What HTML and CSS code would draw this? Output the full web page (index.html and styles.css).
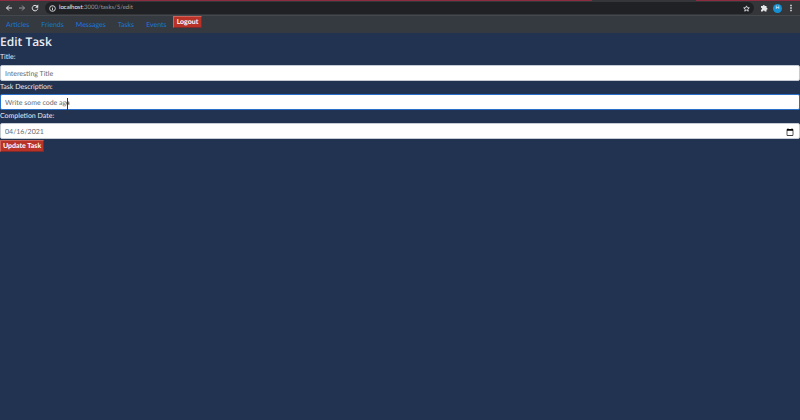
FILE: index.html
```html
<!DOCTYPE html>
<html lang="en-US">
<head>
<meta charset="utf-8">
<title>Edit Task</title>
<link rel="stylesheet" href="styles.css">
</head>
<body>
<header class="browser">
  <div class="tabstrip"><span class="tab"></span></div>
  <div class="toolbar">
    <button class="icon" type="button" aria-label="Back"><svg viewBox="0 0 16 16"><path d="M14 8H3M8 3L3 8l5 5"/></svg></button>
    <button class="icon dim" type="button" aria-label="Forward"><svg viewBox="0 0 16 16"><path d="M2 8h11M8 3l5 5-5 5"/></svg></button>
    <button class="icon" type="button" aria-label="Reload"><svg viewBox="0 0 16 16"><path d="M12.500 5A5.500 5.500 0 1 0 13.500 9"/><path class="solid" d="M14.500 1v6.500H8z"/></svg></button>
    <div class="omnibox">
      <svg class="info" viewBox="0 0 16 16"><circle cx="8" cy="8" r="6.500"/><path d="M8 7v5M8 4v1.500"/></svg>
      <span class="url"><span class="host">localhost</span>:3000/tasks/5/edit</span>
      <button class="star" type="button" aria-label="Bookmark"><svg viewBox="0 0 16 16"><path d="M8 2l1.800 4.200 4.600.4-3.500 3 1.100 4.500L8 11.700l-4 2.400 1.100-4.500-3.500-3 4.600-.4z"/></svg></button>
    </div>
    <button class="icon" type="button" aria-label="Extensions"><svg viewBox="0 0 16 16"><path class="solid" d="M2 4h3.500a2 2 0 1 1 4 0H13v3.500a2 2 0 1 1 0 4V15H9.500a2 2 0 0 0-4 0H2v-3.500a2 2 0 0 0 0-4z"/></svg></button>
    <button class="avatar" type="button">H</button>
    <button class="icon" type="button" aria-label="Menu"><svg viewBox="0 0 16 16"><path class="solid" d="M6.500 1.500h3v3h-3zM6.500 6.500h3v3h-3zM6.500 11.500h3v3h-3z"/></svg></button>
  </div>
</header>
<nav class="navbar">
  <a href="#">Articles</a>
  <a href="#">Friends</a>
  <a href="#">Messages</a>
  <a href="#">Tasks</a>
  <a href="#">Events</a>
  <button class="btn" type="button">Logout</button>
</nav>
<main>
  <h1>Edit Task</h1>
  <form>
    <label for="title">Title:</label>
    <input id="title" type="text" value="Interesting Title">
    <label for="description">Task Description:</label>
    <div class="field">
      <input id="description" class="active" type="text" value="Write some code aga">
      <svg class="pointer" viewBox="0 0 5 15"><path d="M2.500 0v14M1 5h3M1 14h3"/></svg>
    </div>
    <label for="date">Completion Date:</label>
    <input id="date" type="date" value="2021-04-16">
    <button class="btn" type="button">Update Task</button>
  </form>
</main>
</body>
</html>
```
FILE: styles.css
```css
* { box-sizing: border-box; }
body {
  margin: 0;
  min-height: 100vh;
  background: #223351;
  color: #e9edf3;
  font: 7px/10px Lato, "Open Sans", sans-serif;
  text-rendering: geometricPrecision;
}
button, input { font: inherit; text-rendering: inherit; }
button { border: 0; padding: 0; background: none; color: inherit; }

.browser { background: #35363a; border-bottom: 1px solid #45484c; }
.tabstrip { height: 1px; background: #8c2c40; }
.tab { display: block; height: 1px; width: 13%; margin-left: 74%; background: #35363a; }
.toolbar { display: flex; align-items: center; gap: 5px; padding: 1px 5px; height: 14px; }
svg { display: block; fill: none; stroke: #e4e6e8; stroke-width: 2; }
.solid { fill: #e4e6e8; stroke: none; }
.icon { display: block; width: 8px; height: 8px; flex: none; }
.dim { opacity: .55; }
.omnibox {
  flex: 1;
  display: flex;
  align-items: center;
  gap: 3px;
  height: 12px;
  margin: 0 1px;
  padding: 0 4px;
  border-radius: 6px;
  background: #202124;
}
.info { width: 7px; height: 7px; }
.url { flex: 1; color: #989b9f; font-size: 6px; }
.host { color: #f0f1f2; }
.star { width: 7px; height: 7px; }
.avatar {
  width: 9px;
  height: 9px;
  border-radius: 50%;
  background: #1591d3;
  color: #fff;
  font-size: 5px;
  line-height: 9px;
}

.navbar {
  display: flex;
  align-items: flex-start;
  gap: 12px;
  height: 17px;
  padding: 0 6px;
  background: #343a40;
}
.navbar a { margin-top: 4px; color: #1b74dc; text-decoration: none; }
.navbar .btn { margin-left: -6px; padding: 0 3px; }

.btn {
  display: block;
  padding: 0 2px;
  height: 12px;
  border: 1px solid #7c2b2d;
  border-top-color: #cf6258;
  border-left-color: #cf6258;
  background: #b83227;
  color: #fff;
  font-weight: 700;
  line-height: 11px;
}

h1 { margin: 0; font: 600 12px/17px "Open Sans", sans-serif; }
label { display: block; height: 13px; line-height: 12px; }
h1 + form > label:first-child { height: 15px; line-height: 14px; }
form input {
  display: block;
  width: 100%;
  height: 16px;
  padding: 1px 4px 0;
  border: 1px solid #c5cbd3;
  border-radius: 2px;
  background: #fff;
  color: #656b72;
  outline: 0;
}
form .active { border-color: #2a70c8; }
.field { position: relative; }
.pointer {
  position: absolute;
  left: 65px;
  top: 4px;
  width: 5px;
  height: 15px;
  stroke: #30343a;
  stroke-width: 1;
}
form .btn { margin-top: 1px; }
input::-webkit-datetime-edit,
input::-webkit-datetime-edit-fields-wrapper,
input::-webkit-datetime-edit-text,
input::-webkit-datetime-edit-month-field,
input::-webkit-datetime-edit-day-field,
input::-webkit-datetime-edit-year-field { padding: 0; }
input::-webkit-calendar-picker-indicator { width: 8px; height: 8px; padding: 0; margin: 0 1px 0 0; }
```
